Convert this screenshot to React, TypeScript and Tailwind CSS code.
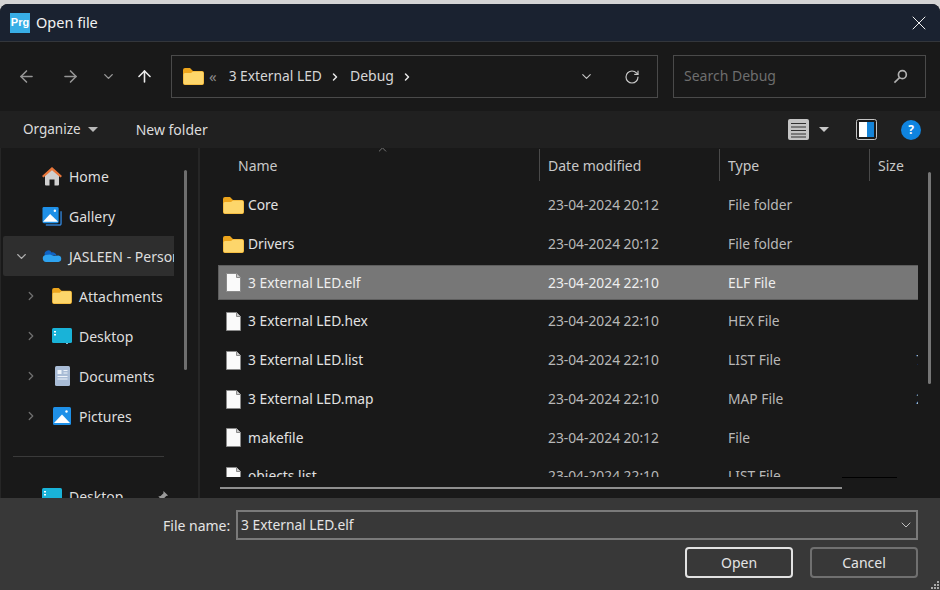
import React from 'react';
import { ArrowLeft, ArrowRight, ArrowUp, ChevronDown, ChevronRight, RotateCw, X } from 'lucide-react';

const FolderIcon = ({ className = 'w-[21px] h-[17px]' }: { className?: string }) => (
  <svg viewBox="0 0 21 17" className={className}>
    <path d="M0 2a2 2 0 0 1 2-2h5l3 3h9a2 2 0 0 1 2 2v10a2 2 0 0 1-2 2H2a2 2 0 0 1-2-2z" fill="#eda51c" />
    <path d="M.5 6.500a1.500 1.500 0 0 1 1.500-1.500h6l2-1.500h9a1.500 1.500 0 0 1 1.500 1.500v10a1.500 1.500 0 0 1-1.500 1.500H2A1.500 1.500 0 0 1 .5 15z" fill="#fdd66b" />
  </svg>
);

const FileIcon = () => (
  <svg viewBox="0 0 15 19" className="w-[15px] h-[19px]">
    <path d="M.5.5h10l4 4v14H.5z" fill="#fafafa" stroke="#8a8a8a" />
    <path d="M10.5.5v4h4" fill="#c8c8c8" stroke="#8a8a8a" />
  </svg>
);

const HomeIcon = () => (
  <svg viewBox="0 0 20 19" className="w-[20px] h-[19px]">
    <path d="M3 8l7-6 7 6v9.500a1 1 0 0 1-1 1h-3.500v-6h-5v6H4a1 1 0 0 1-1-1z" fill="#cfcfcf" />
    <path d="M10 0 0 9l1.500 1.600L10 3.200l8.500 7.400L20 9z" fill="#e8763a" />
  </svg>
);

const GalleryIcon = () => (
  <svg viewBox="0 0 21 20" className="w-[21px] h-[20px]">
    <path d="M4 19.500h14a2 2 0 0 0 2-2V5" fill="none" stroke="#2f7fd0" strokeWidth="1.500" />
    <rect x="0.500" y="0.500" width="17" height="17" rx="1.500" fill="#1e90e8" />
    <path d="M1 16l7.500-8 8.500 8z" fill="#ffffff" />
    <circle cx="13.500" cy="4.500" r="1.300" fill="#ffffff" />
  </svg>
);

const CloudIcon = () => (
  <svg viewBox="0 0 20 12" className="w-[20px] h-[12px]">
    <path d="M3 5.500a3.500 3.500 0 0 1 6.500-3 4 4 0 0 1 5 3z" fill="#0f63c4" />
    <path d="M4 12a3.500 3.500 0 0 1-.5-6.900L8 4.500l4 1.500 4.500-.5A3.300 3.300 0 0 1 16.500 12z" fill="#2ea3f0" />
  </svg>
);

const DesktopIcon = ({ className = 'w-[20px] h-[16px]' }: { className?: string }) => (
  <svg viewBox="0 0 20 16" className={className}>
    <rect width="20" height="15" rx="1.500" fill="#19b3d8" />
    <rect x="2" y="3" width="2" height="1.500" fill="#ffffff" />
    <rect x="2" y="6" width="2" height="1.500" fill="#ffffff" />
    <rect x="14" y="15" width="2" height="1" fill="#8fb8cc" />
  </svg>
);

const DocumentsIcon = () => (
  <svg viewBox="0 0 15 20" className="w-[15px] h-[20px]">
    <rect width="15" height="20" rx="1.500" fill="#a9bcd6" />
    <rect x="2.500" y="4" width="4" height="4" fill="#eef3fa" />
    <path d="M8.500 4.500h4M8.500 7h4M2.500 10.500h10M2.500 13h10" stroke="#eef3fa" />
  </svg>
);

const PicturesIcon = () => (
  <svg viewBox="0 0 18 18" className="w-[18px] h-[18px]">
    <rect width="18" height="18" rx="1.500" fill="#1e90e8" />
    <path d="M1 16l8-8.500L17 16z" fill="#ffffff" />
    <circle cx="13.500" cy="4.500" r="1.200" fill="#ffffff" />
  </svg>
);

const sidebarItems = [
  { label: 'Home', icon: <HomeIcon />, level: 0 },
  { label: 'Gallery', icon: <GalleryIcon />, level: 0 },
  { label: 'JASLEEN - Personal', icon: <CloudIcon />, level: 0, expanded: true },
  { label: 'Attachments', icon: <FolderIcon className="w-[20px] h-[16px]" />, level: 1 },
  { label: 'Desktop', icon: <DesktopIcon />, level: 1 },
  { label: 'Documents', icon: <DocumentsIcon />, level: 1 },
  { label: 'Pictures', icon: <PicturesIcon />, level: 1 },
];

const files = [
  { name: 'Core', date: '23-04-2024 20:12', type: 'File folder', size: '', folder: true },
  { name: 'Drivers', date: '23-04-2024 20:12', type: 'File folder', size: '', folder: true },
  { name: '3 External LED.elf', date: '23-04-2024 22:10', type: 'ELF File', size: '', selected: true },
  { name: '3 External LED.hex', date: '23-04-2024 22:10', type: 'HEX File', size: '' },
  { name: '3 External LED.list', date: '23-04-2024 22:10', type: 'LIST File', size: '7' },
  { name: '3 External LED.map', date: '23-04-2024 22:10', type: 'MAP File', size: '2' },
  { name: 'makefile', date: '23-04-2024 20:12', type: 'File', size: '' },
  { name: 'objects.list', date: '23-04-2024 22:10', type: 'LIST File', size: '' },
];

export default function App() {
  return (
    <div className="w-[940px] h-[590px] bg-[#d4d4d4] pt-[4px] overflow-hidden font-['Noto_Sans',sans-serif] text-[14px]">
      <div className="h-[586px] rounded-t-[8px] overflow-hidden flex flex-col bg-[#191919]">
        {/* title bar */}
        <div className="h-[38px] shrink-0 bg-[#1a2230] border-b border-[#33363b] flex items-center pl-[10px]">
          <div className="w-[20px] h-[20px] bg-[#38aee6] flex items-center justify-center text-white text-[11px] font-bold leading-none font-['Liberation_Sans',sans-serif]">
            Prg
          </div>
          <span className="ml-[6px] text-[#f2f2f2] text-[14.5px]">Open file</span>
          <X className="ml-auto mr-[9px] w-[24px] h-[24px] text-[#f2f2f2]" strokeWidth={1} />
        </div>

        {/* navigation */}
        <div className="h-[69px] shrink-0 bg-[#191919] flex items-center">
          <div className="w-[171px] flex items-center">
            <ArrowLeft className="ml-[17px] w-[19px] h-[19px] text-[#969696]" strokeWidth={2} />
            <ArrowRight className="ml-[25px] w-[19px] h-[19px] text-[#969696]" strokeWidth={2} />
            <ChevronDown className="ml-[21px] w-[15px] h-[15px] text-[#969696]" strokeWidth={2.25} />
            <ArrowUp className="ml-[19px] w-[19px] h-[19px] text-[#ececec]" strokeWidth={2} />
          </div>
          <div className="w-[487px] h-[43px] border border-[#4a4a4a] flex items-center pl-[11px] pr-[17px] text-[#d6d6d6]">
            <FolderIcon />
            <span className="ml-[5px] text-[#8a8a8a] text-[15px] leading-none">«</span>
            <span className="ml-[12px] text-[13.8px] leading-none -translate-y-px">3 External LED</span>
            <ChevronRight className="ml-[7px] w-[12px] h-[12px] text-[#e8e8e8]" strokeWidth={3} />
            <span className="ml-[9px] text-[14px] leading-none -translate-y-px">Debug</span>
            <ChevronRight className="ml-[7px] w-[12px] h-[12px] text-[#e8e8e8]" strokeWidth={3} />
            <ChevronDown className="ml-auto w-[15px] h-[15px] text-[#c8c8c8]" strokeWidth={1.75} />
            <RotateCw className="ml-[30px] w-[16px] h-[16px] text-[#c8c8c8]" strokeWidth={1.75} />
          </div>
          <div className="ml-[15px] w-[253px] h-[43px] border border-[#4a4a4a] flex items-center pl-[10px] pr-[17px] text-[#6e6e6e]">
            <span className="text-[14px] leading-none -translate-y-px">Search Debug</span>
            <svg viewBox="0 0 16 16" className="ml-auto w-[15px] h-[15px]" fill="none" stroke="#b0b0b0" strokeWidth="1.800">
              <circle cx="10" cy="6" r="4.200" />
              <path d="M7 9.200 1.500 14.500" />
            </svg>
          </div>
        </div>

        {/* toolbar */}
        <div className="h-[37px] shrink-0 bg-[#202020] flex items-center pl-[23px] text-[#dcdcdc] text-[13.5px]">
          <span>Organize</span>
          <span className="ml-[7px] w-0 h-0 border-x-[5px] border-x-transparent border-t-[5px] border-t-[#b8b8b8]" />
          <span className="ml-[38px] text-[14px]">New folder</span>
          <svg viewBox="0 0 21 21" className="ml-auto w-[21px] h-[21px]">
            <rect width="21" height="21" rx="2" fill="#c4c4c4" />
            <path d="M3 4.500h15M3 8h15M3 11.500h15M3 15h15M3 18h15" stroke="#303030" strokeWidth="1.200" />
          </svg>
          <span className="ml-[10px] w-0 h-0 border-x-[5px] border-x-transparent border-t-[5px] border-t-[#c8c8c8]" />
          <svg viewBox="0 0 21 21" className="ml-[27px] w-[21px] h-[21px]">
            <rect x="0.500" y="0.500" width="20" height="20" rx="2" fill="#1a1a1a" stroke="#c4c4c4" />
            <rect x="3" y="3" width="8" height="15" fill="#ffffff" />
            <rect x="11" y="3" width="7" height="15" fill="#1584d8" />
          </svg>
          <div className="ml-[24px] mr-[19px] w-[20px] h-[20px] rounded-full bg-[#0f84e0] flex items-center justify-center text-white text-[12px] font-bold leading-none">
            ?
          </div>
        </div>

        {/* main */}
        <div className="h-[350px] shrink-0 flex">
          {/* sidebar */}
          <div className="w-[198px] shrink-0 flex border-l border-[#262626]">
            <div className="w-[173px] shrink-0 pl-[2px] pt-[8px] overflow-hidden">
              {sidebarItems.map((item) => (
                <div
                  key={item.label}
                  className={`h-[40px] w-[171px] flex items-center whitespace-nowrap overflow-hidden text-[#dedede] ${item.expanded ? 'bg-[#2e2e2e] rounded-l-[2px]' : ''}`}
                >
                  {item.level === 1 ? (
                    <>
                      <ChevronRight className="ml-[21px] w-[14px] h-[14px] shrink-0 text-[#6f6f6f]" strokeWidth={2.25} />
                      <div className="ml-[12px] w-[24px] shrink-0 flex justify-center">{item.icon}</div>
                      <span className="ml-[5px]">{item.label}</span>
                    </>
                  ) : (
                    <>
                      {item.expanded ? (
                        <ChevronDown className="ml-[11px] w-[15px] h-[15px] shrink-0 text-[#b0b0b0]" strokeWidth={2.25} />
                      ) : (
                        <div className="w-[26px] shrink-0" />
                      )}
                      <div className="ml-[13px] w-[20px] shrink-0 flex justify-center">{item.icon}</div>
                      <span className="ml-[7px]">{item.label}</span>
                    </>
                  )}
                </div>
              ))}
              <div className="h-[40px] flex items-center">
                <div className="ml-[10px] w-[151px] h-px bg-[#3a3a3a]" />
              </div>
              <div className="h-[40px] w-[171px] flex items-center whitespace-nowrap text-[#dedede]">
                <div className="ml-[39px] w-[20px] shrink-0">
                  <DesktopIcon />
                </div>
                <span className="ml-[7px]">Desktop</span>
                <svg viewBox="0 0 14 14" className="ml-auto mr-[5px] w-[13px] h-[13px]">
                  <path d="M8 1l5 5-2 .5-3 3-.5 2.500L2.500 7 5 6.500l3-3z" fill="#9a9a9a" />
                </svg>
              </div>
            </div>
            <div className="flex-1 flex justify-center pt-[22px]">
              <div className="mr-[1px] w-[3px] h-[200px] rounded-full bg-[#6e6e6e]" />
            </div>
          </div>

          {/* file list */}
          <div className="w-[720px] shrink-0 border-l-2 border-[#262626] flex flex-col overflow-hidden">
            <div className="h-[37px] shrink-0 flex text-[#c8c8c8] pt-[1px]">
              <div className="w-[340px] pl-[38px] flex items-center h-[32px] border-r border-[#4a4a4a] relative">
                Name
                <ChevronDown className="absolute left-[176px] top-[-6px] w-[13px] h-[13px] rotate-180 text-[#8a8a8a]" strokeWidth={1.5} />
              </div>
              <div className="w-[180px] pl-[8px] flex items-center h-[32px] border-r border-[#4a4a4a]">Date modified</div>
              <div className="w-[150px] pl-[8px] flex items-center h-[32px] border-r border-[#4a4a4a]">Type</div>
              <div className="pl-[8px] flex items-center h-[32px]">Size</div>
            </div>
            <div className="h-[292px] shrink-0 overflow-hidden pl-[19px] pt-[1px] text-[13.8px]">
              {files.map((file) => (
                <div key={file.name} className="h-[38.75px] flex items-center">
                  <div
                    className={`w-[700px] h-[33px] flex items-center whitespace-nowrap overflow-hidden ${file.selected ? 'bg-[#777777] outline outline-[#5e5e5e] text-[#eeeeee]' : 'text-[#b8b8b8]'}`}
                  >
                    <div className="w-[29px] shrink-0 flex justify-center">
                      {file.folder ? <FolderIcon /> : <FileIcon />}
                    </div>
                    <span className={`w-[300px] shrink-0 ${file.selected ? '' : 'text-[#e2e2e2]'}`}>{file.name}</span>
                    <span className="w-[180px] shrink-0">{file.date}</span>
                    <span className="w-[150px] shrink-0">{file.type}</span>
                    <span className="flex-1 text-right text-[#b8b8b8] translate-x-[6px]">{file.size}</span>
                  </div>
                </div>
              ))}
            </div>
            <div className="flex items-start">
              <div className="ml-[20px] mt-[10px] w-[622px] h-[2px] bg-[#8f8f8f]" />
              <div className="w-[55px] h-px bg-black" />
            </div>
          </div>
          <div className="flex-1 flex justify-center pt-[24px] pl-[1px]">
            <div className="w-[3px] h-[212px] rounded-full bg-[#767676]" />
          </div>
        </div>

        {/* footer */}
        <div className="flex-1 bg-[#383838] relative pt-[12px] text-[#e4e4e4]">
          <div className="flex items-center">
            <span className="ml-[163px] w-[73px]">File name:</span>
            <div className="w-[682px] h-[30px] border-2 border-[#7a7a7a] flex items-center pl-[3px] pr-[2px] text-[13.8px]">
              <span>3 External LED.elf</span>
              <ChevronDown className="ml-auto w-[16px] h-[16px] text-[#c0c0c0]" strokeWidth={1.5} />
            </div>
          </div>
          <div className="flex mt-[7px] ml-[685px]">
            <div className="w-[108px] h-[31px] rounded-[4px] border-2 border-[#e2e2e2] flex items-center justify-center">Open</div>
            <div className="ml-[17px] w-[108px] h-[31px] rounded-[4px] border-2 border-[#707070] flex items-center justify-center">Cancel</div>
          </div>
          <svg viewBox="0 0 10 10" className="absolute right-0 bottom-0 w-[10px] h-[10px]" fill="#a8a8a8">
            <rect x="7" y="1" width="2" height="2" />
            <rect x="4" y="4" width="2" height="2" />
            <rect x="7" y="4" width="2" height="2" />
            <rect x="1" y="7" width="2" height="2" />
            <rect x="4" y="7" width="2" height="2" />
            <rect x="7" y="7" width="2" height="2" />
          </svg>
        </div>
      </div>
    </div>
  );
}
